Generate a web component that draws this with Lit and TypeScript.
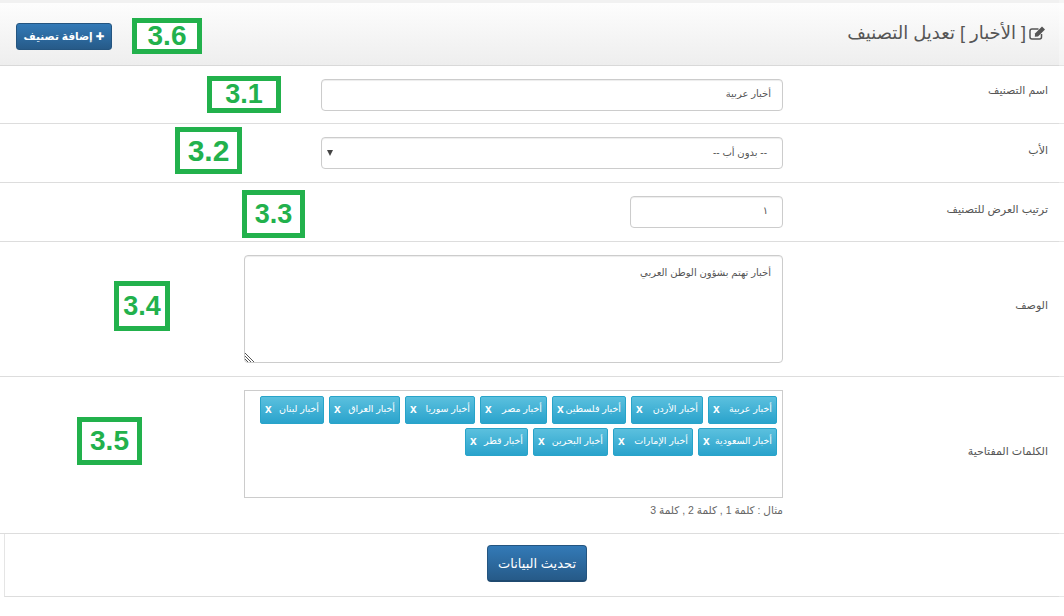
import { LitElement, html, css } from "lit";
import { customElement } from "lit/decorators.js";

const row1 = [
  ["أخبار عربية", 69], ["أخبار الأردن", 72], ["أخبار فلسطين", 74], ["أخبار مصر", 67],
  ["أخبار سوريا", 70], ["أخبار العراق", 71], ["أخبار لبنان", 64],
  ["أخبار السعودية", 79], ["أخبار الإمارات", 80], ["أخبار البحرين", 75], ["أخبار قطر", 63],
] as [string, number][];

const marks: [string, number, number, number, number, number][] = [
  ["3.6", 132, 18, 70, 36, 28],
  ["3.1", 207, 76, 74, 37, 27],
  ["3.2", 175, 127, 67, 47, 30],
  ["3.3", 242, 190, 63, 48, 27],
  ["3.4", 114, 281, 56, 50, 27],
  ["3.5", 77, 417, 65, 48, 28],
];

@customElement("app-root")
export class AppRoot extends LitElement {
  static styles = css`
    :host { display: block; width: 1064px; height: 616px; background: #fff; position: relative; overflow: hidden;
      font-family: "Liberation Sans", "DejaVu Sans", sans-serif; font-size: 10px; color: #555; }
    .page { direction: rtl; padding-top: 3px; background: linear-gradient(#f1f1f1, #f1f1f1) top / 100% 3px no-repeat; }
    .head { height: 63px; box-sizing: border-box; display: flex; justify-content: space-between; align-items: center; padding: 0 18px 0 16px;
      background: linear-gradient(#fdfdfd, #eeeeee); border-bottom: 1px solid #d9d9d9; }
    .title { display: flex; align-items: center; gap: 3px; font-size: 18px; color: #555; margin-top: -2px; }
    .title svg { width: 17px; height: 14px; flex: none; }
    .add { width: 96px; height: 27px; display: flex; align-items: center; justify-content: center; gap: 3px;
      background: linear-gradient(#337ab7, #265a88); border: 1px solid #245580; border-radius: 3px; color: #fff;
      font-size: 10.5px; font-weight: bold; font-family: inherit; box-sizing: border-box; padding: 0; margin-top: 4px; }
    .row { display: grid; grid-template-columns: 281px 1fr; border-bottom: 1px solid #ddd; box-sizing: border-box; align-items: start; }
    .label { padding-right: 16px; font-size: 11px; color: #555; padding-top: 5px; }
    .r1 { height: 58px; padding-top: 13px; }
    .r2, .r3 { height: 59px; padding-top: 13px; }
    .r2 .label, .r3 .label { padding-top: 7px; }
    .r4 { height: 135px; align-items: center; }
    .r4 .label { padding-top: 0; padding-bottom: 8px; }
    .r5 { height: 157px; padding-top: 13px; }
    .r5 .label { padding-top: 55px; }
    .ctl { box-sizing: border-box; height: 32px; width: 462px; border: 1px solid #ccc; border-radius: 4px;
      background: #fff; padding: 0 11px 3px; display: flex; align-items: center; font-size: 10px; color: #555; position: relative;
      box-shadow: inset 0 1px 1px rgba(0,0,0,.075); }
    .sel { padding: 0 15px 1px 0; }
    .sel i { position: absolute; left: 5px; top: 12px; width: 0; height: 0; border: 3.5px solid transparent; border-top: 6px solid #444; border-bottom: 0; }
    .short { width: 153px; padding-right: 14px; }
    .area { box-sizing: border-box; width: 539px; height: 108px; border: 1px solid #ccc; border-radius: 4px; padding: 9px 11px;
      box-shadow: inset 0 1px 1px rgba(0,0,0,.075); position: relative; line-height: 16px; }
    .grip { position: absolute; left: 0; bottom: 0; width: 10px; height: 10px; }
    .tags { box-sizing: border-box; width: 539px; height: 108px; border: 1px solid #ccc; padding: 5px; display: flex; flex-wrap: wrap; gap: 4px 5px; align-content: flex-start; }
    .tag { box-sizing: border-box; height: 28px; background: linear-gradient(#5bc0de, #2aa3cc); border: 1px solid #28a4c9; border-radius: 2px;
      color: #fff; display: flex; align-items: center; justify-content: space-between; padding: 0 4px 3px; font-size: 9.5px; white-space: nowrap; overflow: hidden; }
    .tag b { font-size: 12px; font-family: "Liberation Sans", sans-serif; }
    .hint { margin-top: 5px; font-size: 10.5px; color: #666; line-height: 14px; }
    .foot { margin-left: 4px; height: 63px; box-sizing: border-box; border-left: 1px solid #e5e5e5; border-bottom: 1px solid #ddd;
      display: flex; align-items: flex-start; justify-content: center; padding-top: 11px; }
    .save { box-sizing: border-box; width: 100px; height: 37px; margin-left: 5px; background: linear-gradient(#337ab7, #265a88); border: 1px solid #245580; border-bottom: 2px solid #1f4a70; border-radius: 4px;
      color: #fff; font-size: 13px; padding: 0; font-family: inherit; }
    .mark { position: absolute; box-sizing: border-box; border: 5px solid #22b14c; background: #fff; color: #22b14c;
      display: flex; align-items: center; justify-content: center; font-weight: bold; font-family: "Liberation Sans", sans-serif; }
    .edge { position: absolute; top: 0; right: 0; bottom: 0; width: 5px; background: rgba(255,255,255,.3); }
  `;

  render() {
    return html`
      <div class="page">
        <div class="head">
          <div class="title">
            <svg viewBox="0 0 17 14"><path d="M12.500 8v3a2 2 0 0 1-2 2H3a2 2 0 0 1-2-2V5a2 2 0 0 1 2-2h6.500" fill="none" stroke="#555" stroke-width="1.500"/><path d="M6 7.500L13 .5l3 3-7 7-3.200.3z" fill="#555"/></svg>
            <span>[ الأخبار ] تعديل التصنيف</span>
          </div>
          <button class="add"><span>✚</span><span>إضافة تصنيف</span></button>
        </div>
        <div class="form">
          <div class="row r1"><div class="label">اسم التصنيف</div><div class="ctl">أخبار عربية</div></div>
          <div class="row r2"><div class="label">الأب</div><div class="ctl sel">-- بدون أب --<i></i></div></div>
          <div class="row r3"><div class="label">ترتيب العرض للتصنيف</div><div class="ctl short">١</div></div>
          <div class="row r4"><div class="label">الوصف</div>
            <div class="area">أخبار تهتم بشؤون الوطن العربي
              <svg class="grip" viewBox="0 0 10 10"><path d="M0 1l9 9M0 4l6 6M0 7l3 3" stroke="#555" stroke-width="1"/></svg>
            </div>
          </div>
          <div class="row r5"><div class="label">الكلمات المفتاحية</div>
            <div>
              <div class="tags">${row1.map(([t, w]) => html`<div class="tag" style="width:${w}px"><span>${t}</span><b>x</b></div>`)}</div>
              <div class="hint">مثال : كلمة 1 , كلمة 2 , كلمة 3</div>
            </div>
          </div>
          <div class="foot"><button class="save">تحديث البيانات</button></div>
        </div>
      </div>
      <div class="edge"></div>
      ${marks.map(([t, x, y, w, h, f]) => html`<div class="mark" style="left:${x}px;top:${y}px;width:${w}px;height:${h}px;font-size:${f}px">${t}</div>`)}
    `;
  }
}
